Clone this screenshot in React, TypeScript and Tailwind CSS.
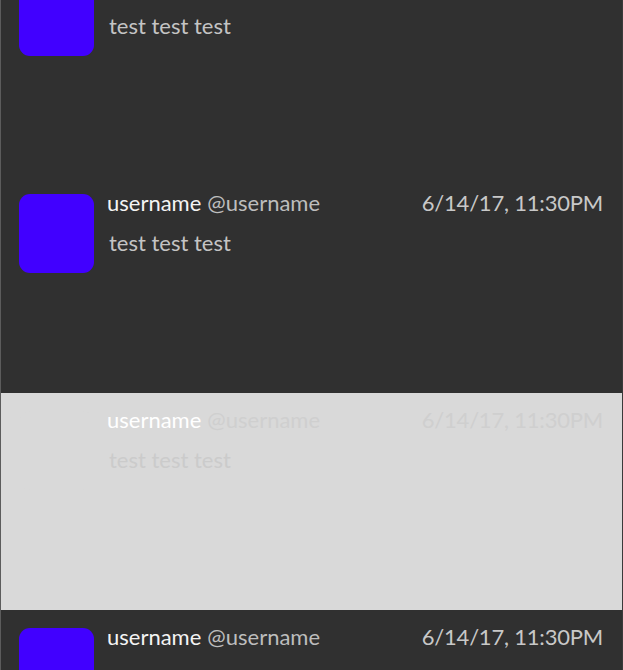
import React from 'react';

type Tweet = {
  name: string;
  handle: string;
  time: string;
  text: string;
  ghost?: boolean;
};

const tweets: Tweet[] = [
  { name: 'username', handle: '@username', time: '6/14/17, 11:30PM', text: 'test test test' },
  { name: 'username', handle: '@username', time: '6/14/17, 11:30PM', text: 'test test test' },
  { name: 'username', handle: '@username', time: '6/14/17, 11:30PM', text: 'test test test', ghost: true },
  { name: 'username', handle: '@username', time: '6/14/17, 11:30PM', text: 'test test test' },
];

const TweetRow: React.FC<{ tweet: Tweet }> = ({ tweet }) => {
  const { ghost } = tweet;
  return (
    <div
      className={`flex h-[217px] shrink-0 pl-[18px] pr-[19px] pt-[13px] ${
        ghost ? 'bg-[#d9d9d9]' : 'bg-[#303030]'
      }`}
    >
      {/* Avatar */}
      <div
        className={`mt-[5px] h-[79px] w-[75px] shrink-0 rounded-[11px] ${
          ghost ? 'bg-[#d9d9d9]' : 'bg-[#4100ff]'
        }`}
      />

      {/* Content */}
      <div className="ml-[13px] flex min-w-0 flex-1 flex-col">
        <div className="flex items-baseline justify-between text-[22px] leading-[28px]">
          <div className="flex items-baseline">
            <span className={ghost ? 'text-white' : 'text-[#f4f4f4]'}>{tweet.name}</span>
            <span className={`ml-[6px] ${ghost ? 'text-[#cfcfcf]' : 'text-[#bdbdbd]'}`}>
              {tweet.handle}
            </span>
          </div>
          <span className={`tracking-[-0.2px] ${ghost ? 'text-[#cfcfcf]' : 'text-[#c8c8c8]'}`}>
            {tweet.time}
          </span>
        </div>
        <p
          className={`ml-[2px] mt-[12px] text-[22px] leading-[28px] ${
            ghost ? 'text-[#cbcbcb]' : 'text-[#c4c4c4]'
          }`}
        >
          {tweet.text}
        </p>
      </div>
    </div>
  );
};

export default function App() {
  return (
    <div
      className="h-[670px] w-[623px] overflow-hidden bg-[#303030]"
      style={{ fontFamily: 'Lato, "Noto Sans", sans-serif' }}
    >
      <div className="-mt-[41px] flex flex-col border-l border-r border-l-[#5c5c5c] border-r-[#3a3a3a]">
        {tweets.map((t, i) => (
          <TweetRow key={i} tweet={t} />
        ))}
      </div>
    </div>
  );
}
